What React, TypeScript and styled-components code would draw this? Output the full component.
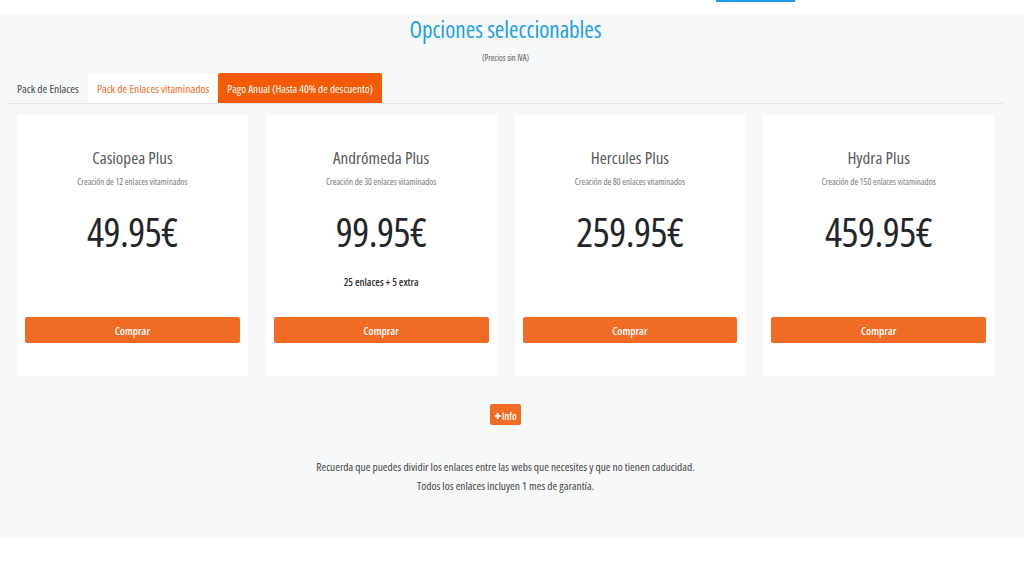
import React from "react";
import styled, { createGlobalStyle } from "styled-components";

const GlobalStyle = createGlobalStyle`
  body {
    margin: 0;
    background: #ffffff;
    font-family: "Open Sans", "Liberation Sans", sans-serif;
    font-stretch: 75%;
  }
`;

const TopStrip = styled.div`
  height: 14px;
  background: #fff;
  display: flex;
  padding-left: 716px;
  .bar {
    width: 79px;
    height: 2px;
    background: #1d9bf0;
  }
`;

const Section = styled.section`
  background: #f7f8fa;
  padding: 0 21px 0 8px;
  height: 524px;
  box-sizing: border-box;
`;

const Title = styled.h2`
  margin: 0;
  text-align: center;
  color: #1a9ee8;
  font-size: 23px;
  font-weight: 400;
  line-height: 30px;
`;

const Subtitle = styled.p`
  margin: 8px 0 0;
  text-align: center;
  color: #555;
  font-size: 8.5px;
  line-height: 12px;
`;

const Tabs = styled.div`
  margin-top: 9px;
  display: flex;
  border-bottom: 1px solid #e4e6ea;
`;

const Tab = styled.div<{ variant: "plain" | "active" | "accent" }>`
  height: 30px;
  padding: 0 9px;
  display: flex;
  align-items: center;
  font-size: ${(p) => (p.variant === "accent" ? "11.2px" : "11.5px")};
  background: ${(p) =>
    p.variant === "active" ? "#fff" : p.variant === "accent" ? "#f35c05" : "transparent"};
  color: ${(p) =>
    p.variant === "active" ? "#f26a24" : p.variant === "accent" ? "#fff" : "#444"};
  border-radius: 2px 2px 0 0;
`;

const Grid = styled.div`
  display: grid;
  grid-template-columns: repeat(4, 1fr);
  gap: 18px;
  padding: 11px 9px 0;
`;

const Card = styled.article`
  background: #fff;
  height: 261px;
  padding: 0 8px;
  display: flex;
  flex-direction: column;
  align-items: center;
  .name {
    margin-top: 32px;
    font-size: 17px;
    color: #555a60;
    line-height: 22px;
  }
  .desc {
    margin-top: 8px;
    font-size: 9px;
    color: #777;
    line-height: 10px;
  }
  .price {
    margin-top: 18px;
    font-size: 40px;
    color: #22252a;
    line-height: 54px;
    letter-spacing: -0.5px;
  }
  .extra {
    margin-top: 15px;
    height: 16px;
    font-size: 10.5px;
    color: #333;
    font-weight: 600;
    line-height: 16px;
  }
`;

const BuyButton = styled.button`
  margin-top: 27px;
  width: 100%;
  height: 26px;
  border: none;
  border-radius: 2px;
  background: #f06c24;
  color: #fff;
  font-family: inherit;
  font-stretch: 75%;
  font-weight: 600;
  font-size: 11px;
`;

const InfoRow = styled.div`
  display: flex;
  justify-content: center;
  padding-top: 28px;
`;

const InfoButton = styled.button`
  height: 21px;
  padding: 0 4px;
  border: none;
  border-radius: 2px;
  background: #f06c24;
  color: #fff;
  font-family: inherit;
  font-stretch: 75%;
  font-weight: 600;
  font-size: 10px;
  .plus {
    font-size: 13px;
    font-weight: 800;
    margin-right: 1px;
  }
`;

const Note = styled.p`
  margin: 32px 0 0;
  text-align: center;
  color: #444;
  font-size: 11.4px;
  line-height: 19px;
`;

const plans = [
  { name: "Casiopea Plus", desc: "Creación de 12 enlaces vitaminados", price: "49.95€", extra: "" },
  { name: "Andrómeda Plus", desc: "Creación de 30 enlaces vitaminados", price: "99.95€", extra: "25 enlaces + 5 extra" },
  { name: "Hercules Plus", desc: "Creación de 80 enlaces vitaminados", price: "259.95€", extra: "" },
  { name: "Hydra Plus", desc: "Creación de 150 enlaces vitaminados", price: "459.95€", extra: "" },
];

const App = () => {
  return (
    <>
      <GlobalStyle />
      <TopStrip>
        <div className="bar" />
      </TopStrip>
      <Section>
        <Title>Opciones seleccionables</Title>
        <Subtitle>(Precios sin IVA)</Subtitle>
        <Tabs>
          <Tab variant="plain">Pack de Enlaces</Tab>
          <Tab variant="active">Pack de Enlaces vitaminados</Tab>
          <Tab variant="accent">Pago Anual (Hasta 40% de descuento)</Tab>
        </Tabs>
        <Grid>
          {plans.map((p) => (
            <Card key={p.name}>
              <div className="name">{p.name}</div>
              <div className="desc">{p.desc}</div>
              <div className="price">{p.price}</div>
              <div className="extra">{p.extra}</div>
              <BuyButton>Comprar</BuyButton>
            </Card>
          ))}
        </Grid>
        <InfoRow>
          <InfoButton>
            <span className="plus">+</span>Info
          </InfoButton>
        </InfoRow>
        <Note>
          Recuerda que puedes dividir los enlaces entre las webs que necesites y que no tienen caducidad.
          <br />
          Todos los enlaces incluyen 1 mes de garantía.
        </Note>
      </Section>
    </>
  );
};

export default App;
